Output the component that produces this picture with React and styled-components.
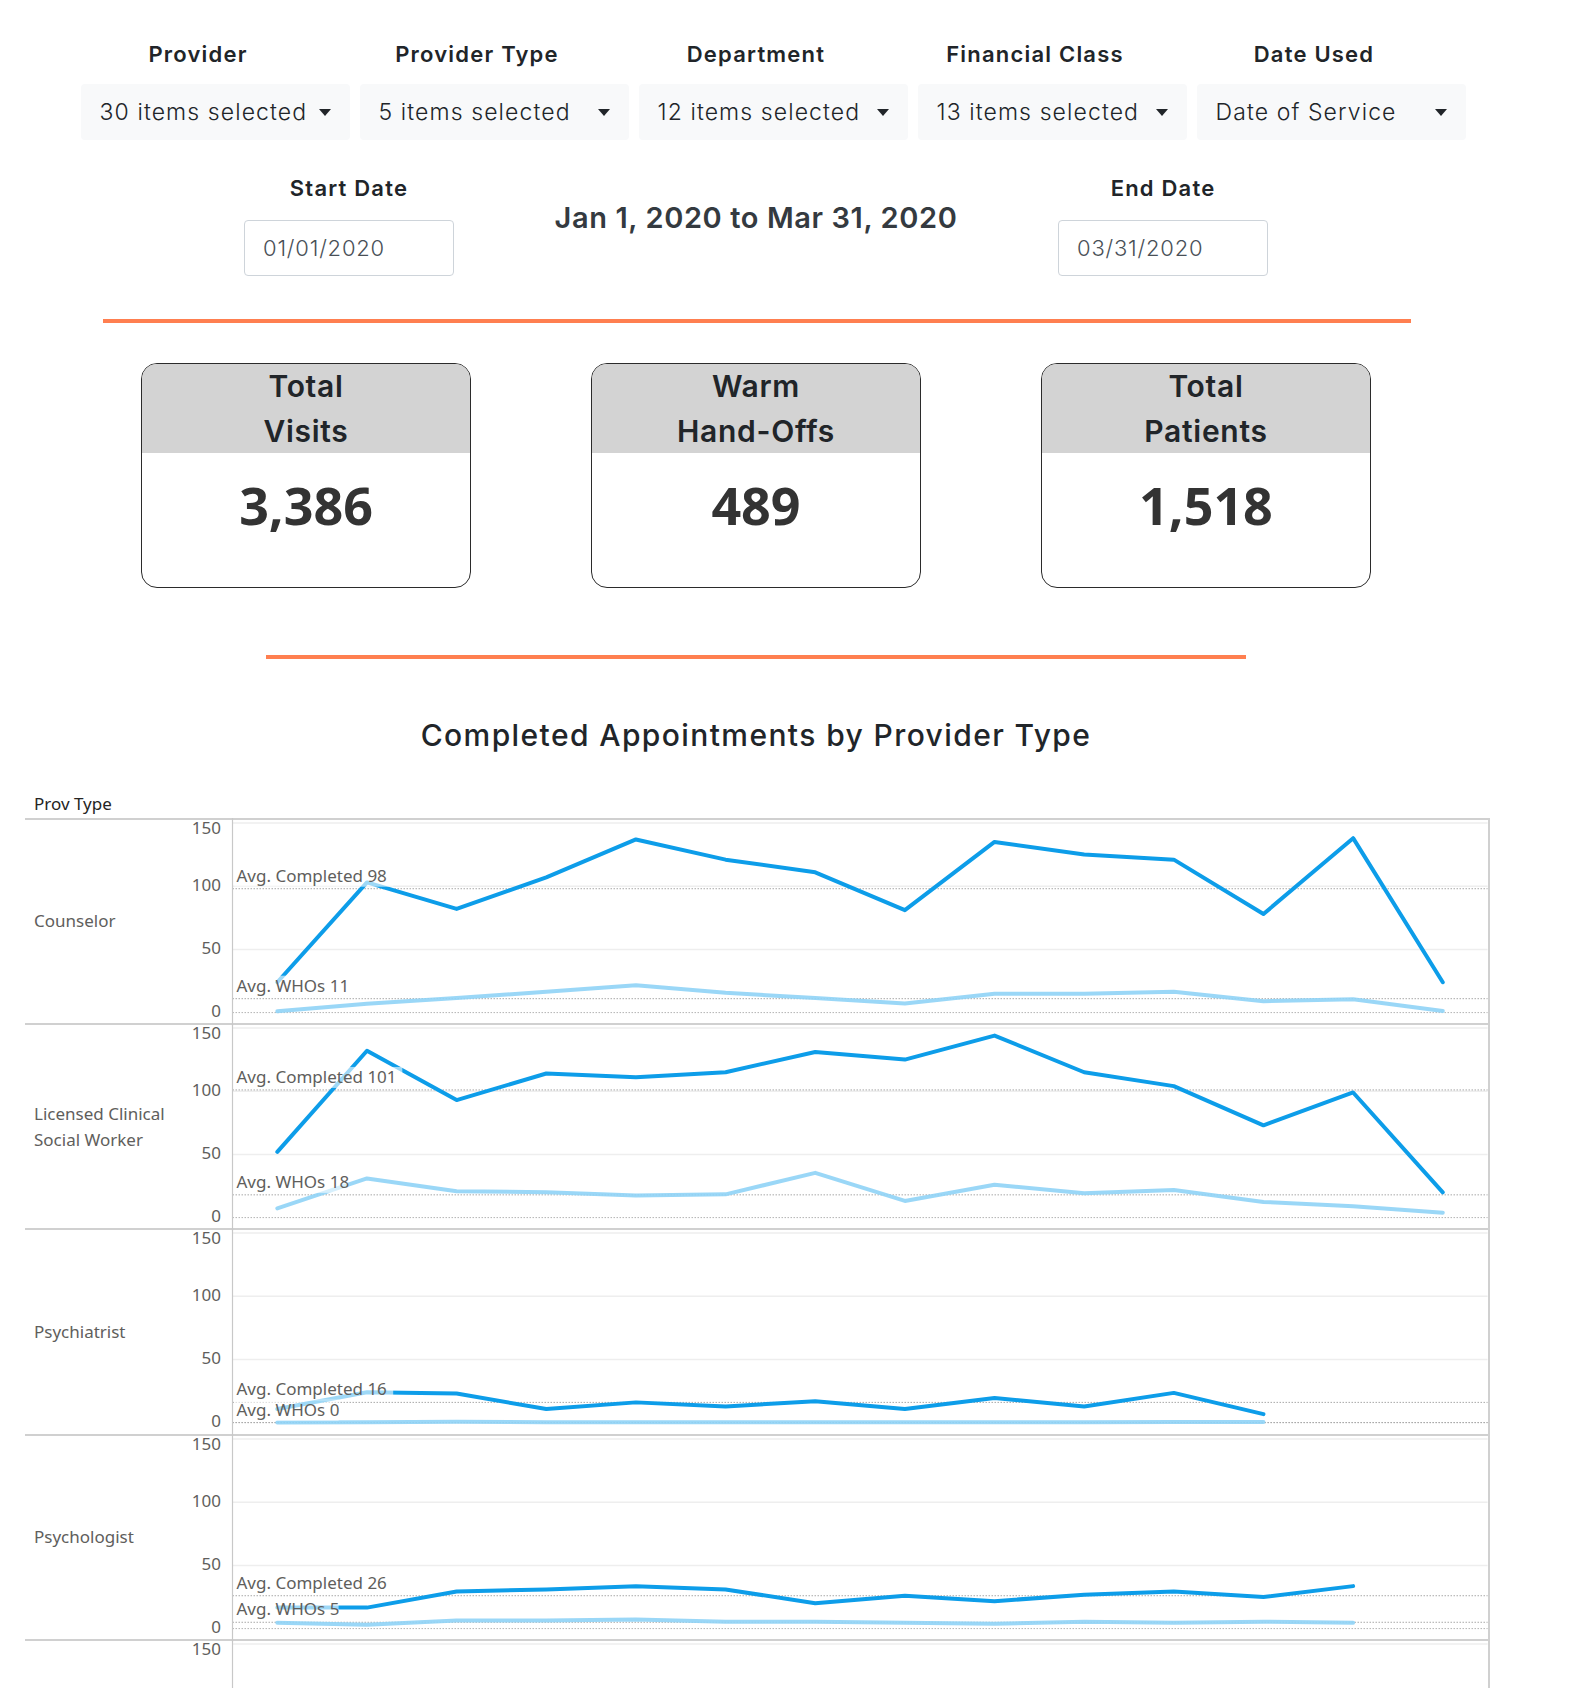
import React from "react";
import styled, { createGlobalStyle } from "styled-components";

const GlobalStyle = createGlobalStyle`
  body {
    margin: 0;
    background: #fff;
    font-family: "Inter", "Open Sans", sans-serif;
    color: #212529;
  }
`;

const Page = styled.div`
  width: 1512px;
  padding-top: 39px;
`;

const FilterRow = styled.div`
  display: grid;
  grid-template-columns: repeat(5, 279px);
  margin-left: 58.5px;
`;

const FilterCol = styled.div`
  display: flex;
  flex-direction: column;
`;

const FieldLabel = styled.div`
  font-size: 22px;
  font-weight: 600;
  letter-spacing: 1.2px;
  line-height: 30px;
  text-align: center;
  color: #212529;
  white-space: nowrap;
`;

const Dropdown = styled.div`
  margin-top: 15px;
  margin-left: 22px;
  width: 269px;
  height: 56px;
  box-sizing: border-box;
  padding: 0 19px;
  display: flex;
  align-items: center;
  justify-content: space-between;
  background: #f8f9fa;
  border-radius: 4px;
  font-size: 23px;
  font-weight: 300;
  letter-spacing: 1.1px;
  color: #212529;
  white-space: nowrap;
`;

const Caret = styled.span`
  flex-shrink: 0;
  width: 0;
  height: 0;
  border-left: 6px solid transparent;
  border-right: 6px solid transparent;
  border-top: 7px solid #212529;
`;

const DateRow = styled.div`
  display: grid;
  grid-template-columns: repeat(3, 407px);
  margin-left: 145.5px;
  margin-top: 33px;
`;

const DateCol = styled.div`
  display: flex;
  flex-direction: column;
  align-items: center;
`;

const DateInput = styled.div`
  margin-top: 16.6px;
  width: 210px;
  height: 56px;
  box-sizing: border-box;
  border: 1px solid #ced4da;
  border-radius: 4px;
  padding: 0 18px;
  display: flex;
  align-items: center;
  font-size: 22px;
  font-weight: 300;
  letter-spacing: 0.8px;
  color: #495057;
`;

const RangeText = styled.div`
  padding-top: 25px;
  font-size: 29px;
  font-weight: 600;
  letter-spacing: 0.6px;
  line-height: 40px;
  color: #343a40;
  text-align: center;
  white-space: nowrap;
`;

const Divider = styled.div`
  width: ${(p) => p.$width}px;
  height: 4px;
  background: #ff7f50;
  margin: ${(p) => p.$margin};
`;

const CardRow = styled.div`
  display: flex;
  justify-content: center;
  gap: 120.6px;
`;

const StatCard = styled.div`
  width: 329.4px;
  height: 225px;
  box-sizing: border-box;
  border: 1px solid #2b2b2b;
  border-radius: 16px;
  overflow: hidden;
  text-align: center;
`;

const StatHeader = styled.div`
  background: #d3d3d3;
  height: 89px;
  font-size: 30px;
  font-weight: 600;
  letter-spacing: 0.7px;
  line-height: 45px;
  color: #212529;
`;

const StatValue = styled.div`
  padding-top: 18px;
  font-family: "Open Sans", "Noto Sans", sans-serif;
  font-size: 52px;
  font-weight: 700;
  line-height: 68px;
  color: #333;
`;

const ChartTitle = styled.div`
  text-align: center;
  font-size: 30px;
  font-weight: 500;
  letter-spacing: 1.4px;
  line-height: 36px;
  color: #212529;
`;

const ChartBox = styled.div`
  margin-top: 37px;
  margin-left: 25px;
  width: 1464.6px;
  font-family: "Noto Sans", "Open Sans", sans-serif;
  color: #605e5c;
`;

const ChartHeader = styled.div`
  height: 28px;
  line-height: 28px;
  padding-left: 9px;
  font-size: 17px;
  color: #252423;
  border-bottom: 2px solid #d0d0d0;
`;

const ChartRow = styled.div`
  display: flex;
  height: 205.4px;
  box-sizing: border-box;
  border-bottom: 2px solid #d0d0d0;
  border-right: 2px solid #d0d0d0;
`;

const RowLabel = styled.div`
  width: 160px;
  flex-shrink: 0;
  box-sizing: border-box;
  padding-left: 9px;
  display: flex;
  align-items: center;
  font-size: 17px;
  line-height: 26px;
  color: #605e5c;
`;

const PlotSvg = styled.svg`
  display: block;
  flex: 1;
  height: 203.4px;
  overflow: visible;
`;

const filters = [
  { label: "Provider", value: "30 items selected" },
  { label: "Provider Type", value: "5 items selected" },
  { label: "Department", value: "12 items selected" },
  { label: "Financial Class", value: "13 items selected" },
  { label: "Date Used", value: "Date of Service" },
];

const stats = [
  { title: ["Total", "Visits"], value: "3,386" },
  { title: ["Warm", "Hand-Offs"], value: "489" },
  { title: ["Total", "Patients"], value: "1,518" },
];

const rows = [
  {
    name: "Counselor",
    completed: [24, 103, 82, 107, 137, 121, 111, 81, 135, 125, 121, 78, 138, 24],
    whos: [1, 7, 11.5, 16.5, 21.7, 15.7, 11.5, 7.2, 14.9, 14.9, 16.5, 9, 10.5, 1.3],
    avgC: 98,
    avgW: 11,
  },
  {
    name: "Licensed Clinical Social Worker",
    completed: [52, 132, 93, 114, 111, 115, 131, 125, 144, 115, 104, 73, 99, 20],
    whos: [7.3, 31, 20.9, 20, 17.5, 18.4, 35.4, 13.2, 26, 19.2, 21.8, 12.4, 9, 3.9],
    avgC: 101,
    avgW: 18,
  },
  {
    name: "Psychiatrist",
    completed: [10.7, 24, 23, 10.7, 16, 12.8, 16.8, 10.7, 19.5, 12.8, 23.5, 6.7],
    whos: [0, 0.3, 0.6, 0.3, 0.2, 0.2, 0.2, 0.2, 0.2, 0.2, 0.5, 0.5],
    avgC: 16,
    avgW: 0,
  },
  {
    name: "Psychologist",
    completed: [16.6, 16.6, 29.4, 31, 33.6, 31, 20, 26, 21.7, 26.8, 29.4, 25, 33.6],
    whos: [4.7, 3, 6.4, 6.4, 7.2, 5.5, 5.5, 4.7, 3.8, 5.5, 4.7, 5.5, 4.7],
    avgC: 26,
    avgW: 5,
  },
  {
    name: "Therapist",
    completed: [30, 42, 55, 48, 61, 52, 44, 58, 63, 50, 47, 39, 45, 28],
    whos: [3, 6, 8, 7, 9, 6, 5, 8, 9, 7, 6, 5, 6, 2],
    avgC: 48,
    avgW: 6,
  },
];

// plot geometry (px inside the row svg)
const W = 1302.6;
const AX = 47.5;
const ZERO = 192.6;
const K = 1.264;
const STEP = (W - AX) / 14;
const X = (i) => AX + STEP * (i + 0.5);
const Y = (v) => ZERO - v * K;
const pts = (arr) => arr.map((v, i) => `${X(i)},${Y(v)}`).join(" ");

const AvgLabel = ({ y, text }) => (
  <g>
    <rect x={AX + 2} y={y - 23} width={text.length * 9.1 + 4} height={21} fill="#fff" opacity="0.6" />
    <text x={AX + 4} y={y - 7} fontSize="17" fill="#605e5c">
      {text}
    </text>
  </g>
);

const Plot = ({ row }) => (
  <PlotSvg>
    {[150, 100, 50].map((t) => (
      <line key={t} x1={AX} x2={W} y1={Y(t)} y2={Y(t)} stroke="#eeeeee" strokeWidth="1.5" />
    ))}
    <line x1={AX} x2={W} y1={ZERO} y2={ZERO} stroke="#b3b3b3" strokeWidth="1" strokeDasharray="1.5 1.5" />
    <line x1={AX} x2={W} y1={Y(row.avgC)} y2={Y(row.avgC)} stroke="#a8a8a8" strokeWidth="1" strokeDasharray="1.5 1.5" />
    <line x1={AX} x2={W} y1={Y(row.avgW)} y2={Y(row.avgW)} stroke="#a8a8a8" strokeWidth="1" strokeDasharray="1.5 1.5" />
    <line x1={AX} x2={AX} y1={-2} y2={205.4} stroke="#c8c8c8" strokeWidth="1.2" />
    {[150, 100, 50, 0].map((t) => (
      <text
        key={t}
        x={36}
        y={t === 150 ? 9.7 : Y(t)}
        textAnchor="end"
        dominantBaseline="middle"
        fontSize="17"
        fill="#605e5c"
      >
        {t}
      </text>
    ))}
    <polyline points={pts(row.whos)} fill="none" stroke="#8fd3f6" strokeWidth="4" strokeLinejoin="round" strokeLinecap="round" opacity="0.9" />
    <polyline points={pts(row.completed)} fill="none" stroke="#0d9de9" strokeWidth="4" strokeLinejoin="round" strokeLinecap="round" />
    <AvgLabel y={Y(row.avgC)} text={`Avg. Completed ${row.avgC}`} />
    <AvgLabel y={Y(row.avgW)} text={`Avg. WHOs ${row.avgW}`} />
  </PlotSvg>
);

const App = () => (
  <Page>
    <GlobalStyle />
    <FilterRow>
      {filters.map((f) => (
        <FilterCol key={f.label}>
          <FieldLabel>{f.label}</FieldLabel>
          <Dropdown>
            {f.value}
            <Caret />
          </Dropdown>
        </FilterCol>
      ))}
    </FilterRow>

    <DateRow>
      <DateCol>
        <FieldLabel>Start Date</FieldLabel>
        <DateInput>01/01/2020</DateInput>
      </DateCol>
      <RangeText>Jan 1, 2020 to Mar 31, 2020</RangeText>
      <DateCol>
        <FieldLabel>End Date</FieldLabel>
        <DateInput>03/31/2020</DateInput>
      </DateCol>
    </DateRow>

    <Divider $width={1308} $margin="43px 0 40px 103px" />

    <CardRow>
      {stats.map((s) => (
        <StatCard key={s.value}>
          <StatHeader>
            {s.title[0]}
            <br />
            {s.title[1]}
          </StatHeader>
          <StatValue>{s.value}</StatValue>
        </StatCard>
      ))}
    </CardRow>

    <Divider $width={980} $margin="67px 0 58px 266px" />

    <ChartTitle>Completed Appointments by Provider Type</ChartTitle>

    <ChartBox>
      <ChartHeader>Prov Type</ChartHeader>
      {rows.map((r) => (
        <ChartRow key={r.name}>
          <RowLabel>{r.name}</RowLabel>
          <Plot row={r} />
        </ChartRow>
      ))}
    </ChartBox>
  </Page>
);

export default App;
